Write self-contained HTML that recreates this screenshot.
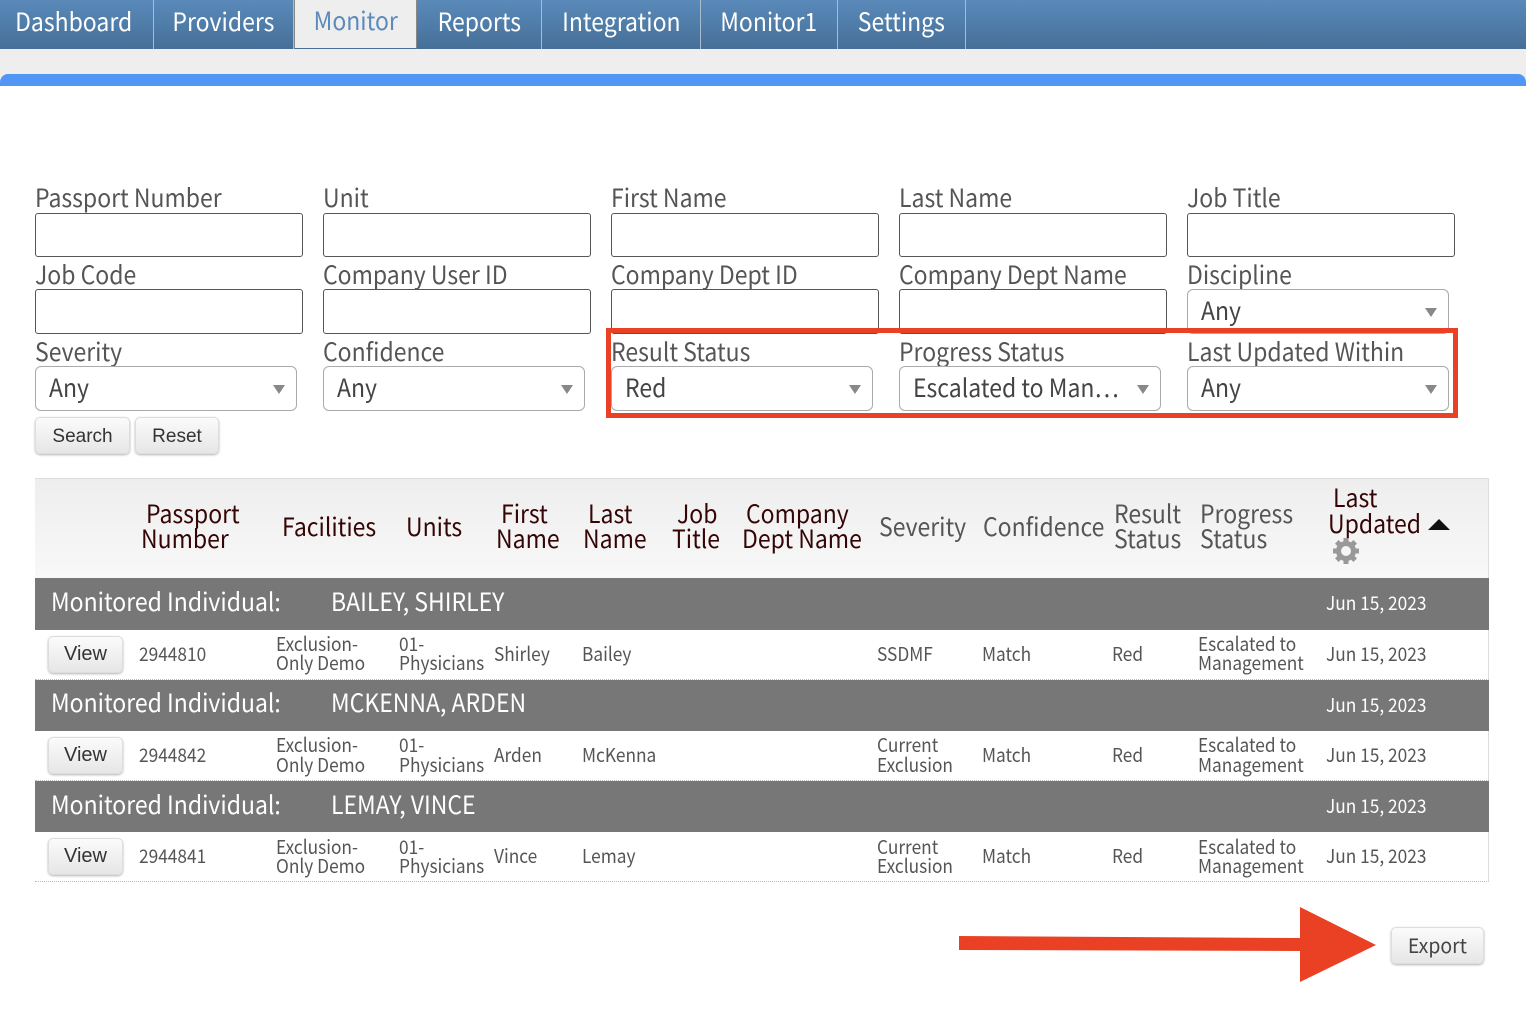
<!DOCTYPE html>
<html><head><meta charset="utf-8">
<style>
*{box-sizing:border-box}
html,body{margin:0;padding:0;background:#fff;width:1526px;height:1024px;overflow:hidden}
body{position:relative;font-family:"Noto Sans CJK JP","Liberation Sans",sans-serif;color:#555}
.nav{position:absolute;left:0;top:0;width:1526px;height:49px;background:linear-gradient(#5a8aba,#466f97)}
.n{position:absolute;top:0;height:49px;color:#fff;font-size:25px;line-height:42px;border-right:1px solid #a9bccf;text-align:center;white-space:nowrap}
.n span{display:inline-block;transform:scaleX(.92);transform-origin:50% 50%}
.l{position:absolute;font-size:25px;line-height:30px;color:#555;white-space:nowrap;margin-top:-1px;transform:scaleX(.92);transform-origin:0 50%}
.i{position:absolute;width:268px;height:45px;background:#fff;border:1px solid #555;border-radius:3px}
.s{position:absolute;width:262px;height:45px;background:#fff;border:1px solid #aaa;border-radius:6px;font-size:25px;line-height:41px;padding-left:12.500px;color:#444;white-space:nowrap}
.s span{display:inline-block;transform:scaleX(.92);transform-origin:0 50%}
.s:after{content:"";position:absolute;right:11px;top:18px;border-left:6px solid transparent;border-right:6px solid transparent;border-top:9px solid #888}
.b{position:absolute;background:linear-gradient(#fbfbfb,#e6e6e6);border:1px solid #ddd;border-radius:5px;box-shadow:0 1px 2px rgba(0,0,0,.3);font-family:"Liberation Sans",sans-serif;font-size:19px;color:#333;text-align:center}
.h{position:absolute;font-size:25px;line-height:25px;color:#350505;white-space:nowrap;margin-left:-.5px;transform:scaleX(.92);transform-origin:0 50%}
.g{color:#555}
.band{position:absolute;left:35px;width:1454px;height:52px;background:#777;color:#fff}
.band span{position:absolute;white-space:nowrap;font-size:25px;line-height:30px;top:8px;transform:scaleX(.92);transform-origin:0 50%}
.band .d{font-size:19px;left:1290.500px;top:10px;transform:scaleX(.91)}
.row{position:absolute;left:35px;width:1454px;height:50px;border-right:1px solid #ddd;border-bottom:1px dotted #bbb}
.c{position:absolute;font-size:19px;line-height:19px;color:#555;white-space:nowrap;margin:-1px 0 0 -.5px;transform:scaleX(.91);transform-origin:0 50%}
</style></head><body>
<div class="nav">
<div class="n" style="left:0;width:148px;border-right:0"><span>Dashboard</span></div>
<div style="position:absolute;left:153px;top:0;width:1px;height:49px;background:#a9bccf"></div>
<div class="n" style="left:154px;width:140px"><span>Providers</span></div>
<div class="n" style="left:294px;width:123px;background:#eee;color:#5b8abb;border:1px solid #888;border-top:0;border-bottom:1px solid #466f97;line-height:41px"><span>Monitor</span></div>
<div class="n" style="left:417px;width:125px"><span>Reports</span></div>
<div class="n" style="left:542px;width:158px;border-right:0"><span>Integration</span></div>
<div style="position:absolute;left:700px;top:0;width:1px;height:49px;background:#a9bccf"></div>
<div class="n" style="left:701px;width:137px"><span>Monitor1</span></div>
<div class="n" style="left:838px;width:128px"><span>Settings</span></div>
</div>
<div style="position:absolute;left:0;top:49px;width:1526px;height:25px;background:#eee"></div>
<div style="position:absolute;left:0;top:74px;width:1526px;height:12px;background:#5195f5;border-radius:8px 8px 0 0;box-shadow:0 -8px 0 #eee"></div>

<div class="l" style="left:35px;top:183px">Passport Number</div>
<div class="l" style="left:323px;top:183px">Unit</div>
<div class="l" style="left:611px;top:183px">First Name</div>
<div class="l" style="left:899px;top:183px">Last Name</div>
<div class="l" style="left:1187px;top:183px">Job Title</div>
<div class="i" style="left:35px;top:213px;height:44px"></div>
<div class="i" style="left:323px;top:213px;height:44px"></div>
<div class="i" style="left:611px;top:213px;height:44px"></div>
<div class="i" style="left:899px;top:213px;height:44px"></div>
<div class="i" style="left:1187px;top:213px;height:44px"></div>

<div class="l" style="left:35px;top:260px">Job Code</div>
<div class="l" style="left:323px;top:260px">Company User ID</div>
<div class="l" style="left:611px;top:260px">Company Dept ID</div>
<div class="l" style="left:899px;top:260px">Company Dept Name</div>
<div class="l" style="left:1187px;top:260px">Discipline</div>
<div class="i" style="left:35px;top:289px"></div>
<div class="i" style="left:323px;top:289px"></div>
<div class="i" style="left:611px;top:289px"></div>
<div class="i" style="left:899px;top:289px"></div>
<div class="s" style="left:1187px;top:289px"><span>Any</span></div>

<div class="l" style="left:35px;top:337px">Severity</div>
<div class="l" style="left:323px;top:337px">Confidence</div>
<div class="l" style="left:611px;top:337px">Result Status</div>
<div class="l" style="left:899px;top:337px">Progress Status</div>
<div class="l" style="left:1187px;top:337px">Last Updated Within</div>
<div class="s" style="left:35px;top:366px"><span>Any</span></div>
<div class="s" style="left:323px;top:366px"><span>Any</span></div>
<div class="s" style="left:611px;top:366px"><span>Red</span></div>
<div class="s" style="left:899px;top:366px"><span>Escalated to Man…</span></div>
<div class="s" style="left:1187px;top:366px"><span>Any</span></div>

<div style="position:absolute;left:606px;top:328px;width:852px;height:90px;border:5px solid #ea4125"></div>

<div class="b" style="left:35px;top:417px;width:95px;height:37px;line-height:37px">Search</div>
<div class="b" style="left:135px;top:417px;width:84px;height:37px;line-height:37px">Reset</div>

<div style="position:absolute;left:35px;top:478px;width:1454px;height:100px;background:linear-gradient(#eee,#f8f8f8);border-top:1px solid #ddd;border-right:1px solid #ddd"></div>
<div class="h" style="left:146px;top:501px">Passport</div>
<div class="h" style="left:141px;top:526px">Number</div>
<div class="h" style="left:282.500px;top:514px">Facilities</div>
<div class="h" style="left:406px;top:514px">Units</div>
<div class="h" style="left:501px;top:501px">First</div>
<div class="h" style="left:496px;top:526px">Name</div>
<div class="h" style="left:588px;top:501px">Last</div>
<div class="h" style="left:583px;top:526px">Name</div>
<div class="h" style="left:677px;top:501px">Job</div>
<div class="h" style="left:672px;top:526px">Title</div>
<div class="h" style="left:746.500px;top:501px">Company</div>
<div class="h" style="left:742px;top:526px">Dept Name</div>
<div class="h g" style="left:879px;top:514px">Severity</div>
<div class="h g" style="left:983.500px;top:514px">Confidence</div>
<div class="h g" style="left:1114px;top:501px">Result</div>
<div class="h g" style="left:1114.500px;top:526px">Status</div>
<div class="h g" style="left:1200px;top:501px">Progress</div>
<div class="h g" style="left:1200px;top:526px">Status</div>
<div class="h" style="left:1333px;top:485px">Last</div>
<div class="h" style="left:1328px;top:511px">Updated</div>
<div style="position:absolute;left:1428px;top:519px;border-left:11px solid transparent;border-right:11px solid transparent;border-bottom:11px solid #111"></div>
<svg style="position:absolute;left:1333px;top:538px" width="26" height="26" viewBox="0 0 26 26"><circle cx="13" cy="13" r="7.5" fill="none" stroke="#999" stroke-width="5"/><g stroke="#999" stroke-width="5"><path d="M13 0v5M13 21v5M0 13h5M21 13h5M3.800 3.800l3.500 3.500M18.700 18.700l3.500 3.500M3.800 22.200l3.500-3.500M18.700 7.300l3.500-3.500"/></g></svg>

<div class="band" style="top:578px"><span style="left:16px">Monitored Individual:</span><span style="left:296px">BAILEY, SHIRLEY</span><span class="d">Jun 15, 2023</span></div>
<div class="row" style="top:630px"></div>
<div class="b" style="left:48px;top:636px;width:75px;height:37px;line-height:34px;font-size:20px">View</div>
<div class="c" style="left:139px;top:645px">2944810</div>
<div class="c" style="left:276px;top:635px">Exclusion-</div>
<div class="c" style="left:276px;top:654px">Only Demo</div>
<div class="c" style="left:399px;top:635px">01-</div>
<div class="c" style="left:399px;top:654px">Physicians</div>
<div class="c" style="left:494px;top:645px">Shirley</div>
<div class="c" style="left:582px;top:645px">Bailey</div>
<div class="c" style="left:877px;top:645px">SSDMF</div>
<div class="c" style="left:982px;top:645px">Match</div>
<div class="c" style="left:1112px;top:645px">Red</div>
<div class="c" style="left:1198px;top:635px">Escalated to</div>
<div class="c" style="left:1198px;top:654px">Management</div>
<div class="c" style="left:1326px;top:645px">Jun 15, 2023</div>

<div class="band" style="top:680px;height:51px"><span style="left:16px;top:7px">Monitored Individual:</span><span style="left:296px;top:7px">MCKENNA, ARDEN</span><span class="d">Jun 15, 2023</span></div>
<div class="row" style="top:731px"></div>
<div class="b" style="left:48px;top:737px;width:75px;height:37px;line-height:34px;font-size:20px">View</div>
<div class="c" style="left:139px;top:746px">2944842</div>
<div class="c" style="left:276px;top:736px">Exclusion-</div>
<div class="c" style="left:276px;top:756px">Only Demo</div>
<div class="c" style="left:399px;top:736px">01-</div>
<div class="c" style="left:399px;top:756px">Physicians</div>
<div class="c" style="left:494px;top:746px">Arden</div>
<div class="c" style="left:582px;top:746px">McKenna</div>
<div class="c" style="left:877px;top:736px">Current</div>
<div class="c" style="left:877px;top:756px">Exclusion</div>
<div class="c" style="left:982px;top:746px">Match</div>
<div class="c" style="left:1112px;top:746px">Red</div>
<div class="c" style="left:1198px;top:736px">Escalated to</div>
<div class="c" style="left:1198px;top:756px">Management</div>
<div class="c" style="left:1326px;top:746px">Jun 15, 2023</div>

<div class="band" style="top:781px;height:51px"><span style="left:16px">Monitored Individual:</span><span style="left:296px">LEMAY, VINCE</span><span class="d">Jun 15, 2023</span></div>
<div class="row" style="top:832px"></div>
<div class="b" style="left:48px;top:838px;width:75px;height:37px;line-height:34px;font-size:20px">View</div>
<div class="c" style="left:139px;top:847px">2944841</div>
<div class="c" style="left:276px;top:838px">Exclusion-</div>
<div class="c" style="left:276px;top:857px">Only Demo</div>
<div class="c" style="left:399px;top:838px">01-</div>
<div class="c" style="left:399px;top:857px">Physicians</div>
<div class="c" style="left:494px;top:847px">Vince</div>
<div class="c" style="left:582px;top:847px">Lemay</div>
<div class="c" style="left:877px;top:838px">Current</div>
<div class="c" style="left:877px;top:857px">Exclusion</div>
<div class="c" style="left:982px;top:847px">Match</div>
<div class="c" style="left:1112px;top:847px">Red</div>
<div class="c" style="left:1198px;top:838px">Escalated to</div>
<div class="c" style="left:1198px;top:857px">Management</div>
<div class="c" style="left:1326px;top:847px">Jun 15, 2023</div>

<svg style="position:absolute;left:955px;top:905px" width="425" height="80" viewBox="0 0 425 80"><path fill="#ea4125" d="M4 31L345 33V2L421 40 345 77V46L4 45Z"/></svg>
<div class="b" style="left:1391px;top:927px;width:93px;height:37px;line-height:34px;font-family:'Noto Sans CJK JP','Liberation Sans',sans-serif;font-size:20px;color:#444"><span style="display:inline-block;transform:scaleX(.97)">Export</span></div>
</body></html>
